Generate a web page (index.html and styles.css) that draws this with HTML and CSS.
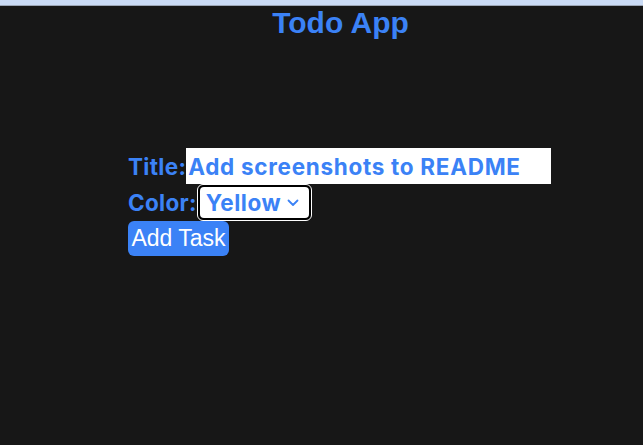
FILE: index.html
```html
<!DOCTYPE html>
<html lang="en">
<head>
<meta charset="utf-8">
<title>Todo App</title>
<link rel="stylesheet" href="styles.css">
</head>
<body>
<div class="topbar"></div>
<h1 class="app-title">Todo App</h1>
<form class="todo-form">
  <div class="row">
    <label class="label" for="title">Title:</label>
    <input class="title-input" id="title" type="text" value="Add screenshots to README">
  </div>
  <div class="row">
    <label class="label" for="color">Color:</label>
    <span class="select-wrap">
      <select class="color-select" id="color">
        <option>Yellow</option>
        <option>Red</option>
        <option>Green</option>
        <option>Blue</option>
      </select>
      <svg class="chevron" width="12" height="8" viewBox="0 0 12 8"><path d="M1.5 1.5 L6 6 L10.5 1.5" fill="none" stroke="#3b82f6" stroke-width="1.8" stroke-linecap="round" stroke-linejoin="round"/></svg>
    </span>
  </div>
  <div class="row">
    <button class="add-btn" type="button">Add Task</button>
  </div>
</form>
</body>
</html>
```
FILE: styles.css
```css
html, body {
  margin: 0;
  padding: 0;
  background: #171717;
}
body {
  width: 643px;
  height: 445px;
  overflow: hidden;
}
.topbar {
  height: 5px;
  background: #cadbf5;
  border-bottom: 1px solid #9ca6b6;
}
.app-title {
  margin: 0;
  padding-left: 38px;
  text-align: center;
  font-family: "Liberation Sans", Arial, sans-serif;
  font-weight: bold;
  font-size: 30px;
  line-height: 33px;
  color: #3b82f6;
}
.todo-form {
  display: flex;
  flex-direction: column;
  align-items: flex-start;
  padding-left: 128px;
  margin-top: 109px;
}
.row {
  display: flex;
  align-items: center;
}
.label {
  font-family: Inter, "Noto Sans", sans-serif;
  font-weight: bold;
  font-size: 22.5px;
  color: #3b82f6;
  letter-spacing: 0.3px;
}
.title-input {
  box-sizing: border-box;
  width: 365px;
  height: 36px;
  border: none;
  outline: none;
  margin: 0;
  padding: 0 2px;
  background: #ffffff;
  font-family: Inter, "Noto Sans", sans-serif;
  font-weight: bold;
  font-size: 22.5px;
  color: #3b82f6;
  letter-spacing: 0.7px;
}
.select-wrap {
  display: flex;
  align-items: center;
  box-sizing: border-box;
  height: 37px;
  width: 115px;
  border: 1px solid #ffffff;
  border-radius: 6px;
  background: #000000;
  padding: 2px;
}
.color-select {
  appearance: none;
  -webkit-appearance: none;
  box-sizing: border-box;
  flex: 1 1 0;
  min-width: 0;
  width: 0;
  height: 100%;
  border: none;
  outline: none;
  margin: 0;
  border-radius: 4px;
  background: #ffffff;
  padding: 0 20px 0 6px;
  font-family: Inter, "Noto Sans", sans-serif;
  font-weight: bold;
  font-size: 22.5px;
  color: #3b82f6;
  letter-spacing: 0.5px;
}
.chevron {
  flex: none;
  margin-left: -22px;
  margin-right: 10px;
  pointer-events: none;
}
.add-btn {
  box-sizing: border-box;
  height: 35px;
  width: 101px;
  border: none;
  border-radius: 6px;
  background: #3b82f6;
  color: #ffffff;
  padding: 0 2px;
  font-family: "Liberation Sans", Arial, sans-serif;
  font-size: 23px;
  line-height: 35px;
  white-space: nowrap;
}
```
